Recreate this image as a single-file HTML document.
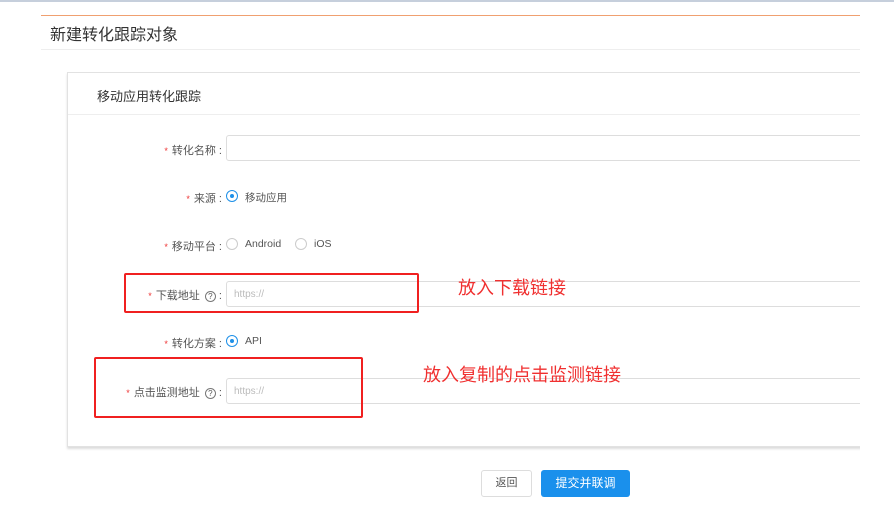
<!DOCTYPE html><html><head><meta charset="utf-8"><style>
body{margin:0;width:894px;height:515px;background:#fff;position:relative;overflow:hidden;font-family:"Liberation Sans","Noto Sans CJK SC",sans-serif;color:#333}
.clip{position:absolute;left:0;top:0;width:860px;height:515px;overflow:hidden}
.a{position:absolute}
.lbl{position:absolute;right:638px;font-size:11px;color:#555;white-space:nowrap}
.lbl b{color:#e33;font-weight:normal;margin-right:4px;font-size:9px}
.inp{position:absolute;left:226px;width:700px;height:26px;border:1px solid #ddd;border-radius:3px;box-sizing:border-box;font-size:10px;color:#bbb;padding:7px 0 0 7px}
.r{position:absolute;width:12px;height:12px;border:1px solid #ccc;border-radius:50%;box-sizing:border-box}
.r.on{border-color:#1e90e8}.r.on:after{content:"";position:absolute;left:3px;top:3px;width:4px;height:4px;border-radius:50%;background:#1e90e8}
.t{position:absolute;font-size:10.5px;color:#555}
.q{display:inline-block;width:9px;height:9px;border:1px solid #777;border-radius:50%;font-size:8px;line-height:9px;text-align:center;margin-left:2px}
.box{position:absolute;border:2px solid #f02020;border-radius:2px}
.ann{position:absolute;color:#f03030;font-size:18px}
</style></head><body>
<div class="a" style="left:0;top:0;width:894px;height:2px;background:#c6cfdc"></div>
<div class="clip">
<div class="a" style="left:41px;top:15px;width:819px;height:1px;background:#f0a070"></div>
<div class="a" style="left:50px;top:21px;font-size:16px;color:#333">新建转化跟踪对象</div>
<div class="a" style="left:41px;top:49px;width:819px;height:1px;background:#eee"></div>
<div class="a" style="left:67px;top:72px;width:860px;height:375px;border:1px solid #e2e2e2;box-shadow:0 2px 2px #ddd;box-sizing:border-box"></div>
<div class="a" style="left:97px;top:86px;font-size:13px;color:#333">移动应用转化跟踪</div>
<div class="a" style="left:68px;top:114px;width:800px;height:1px;background:#eee"></div>

<div class="lbl" style="top:142px"><b>*</b>转化名称 :</div>
<div class="inp" style="top:135px"></div>
<div class="lbl" style="top:190px"><b>*</b>来源 :</div>
<div class="r on" style="left:226px;top:190px"></div><div class="t" style="left:245px;top:190px">移动应用</div>
<div class="lbl" style="top:238px"><b>*</b>移动平台 :</div>
<div class="r" style="left:226px;top:238px"></div><div class="t" style="left:245px;top:238px">Android</div>
<div class="r" style="left:295px;top:238px"></div><div class="t" style="left:314px;top:238px">iOS</div>
<div class="lbl" style="top:287px"><b>*</b>下载地址 <span class="q">?</span> :</div>
<div class="inp" style="top:281px">https://</div>
<div class="lbl" style="top:335px"><b>*</b>转化方案 :</div>
<div class="r on" style="left:226px;top:335px"></div><div class="t" style="left:245px;top:335px">API</div>
<div class="lbl" style="top:384px"><b>*</b>点击监测地址 <span class="q">?</span> :</div>
<div class="inp" style="top:378px">https://</div>

<div class="box" style="left:124px;top:273px;width:291px;height:36px"></div>
<div class="box" style="left:94px;top:357px;width:265px;height:57px"></div>
<div class="ann" style="left:458px;top:274px">放入下载链接</div>
<div class="ann" style="left:423px;top:361px">放入复制的点击监测链接</div>

<div class="a" style="left:481px;top:470px;width:51px;height:27px;border:1px solid #ddd;border-radius:3px;box-sizing:border-box;font-size:11px;text-align:center;line-height:25px;color:#555">返回</div>
<div class="a" style="left:541px;top:470px;width:89px;height:27px;background:#1a90ec;border-radius:3px;font-size:12px;text-align:center;line-height:27px;color:#fff">提交并联调</div>
</div>
</body></html>
